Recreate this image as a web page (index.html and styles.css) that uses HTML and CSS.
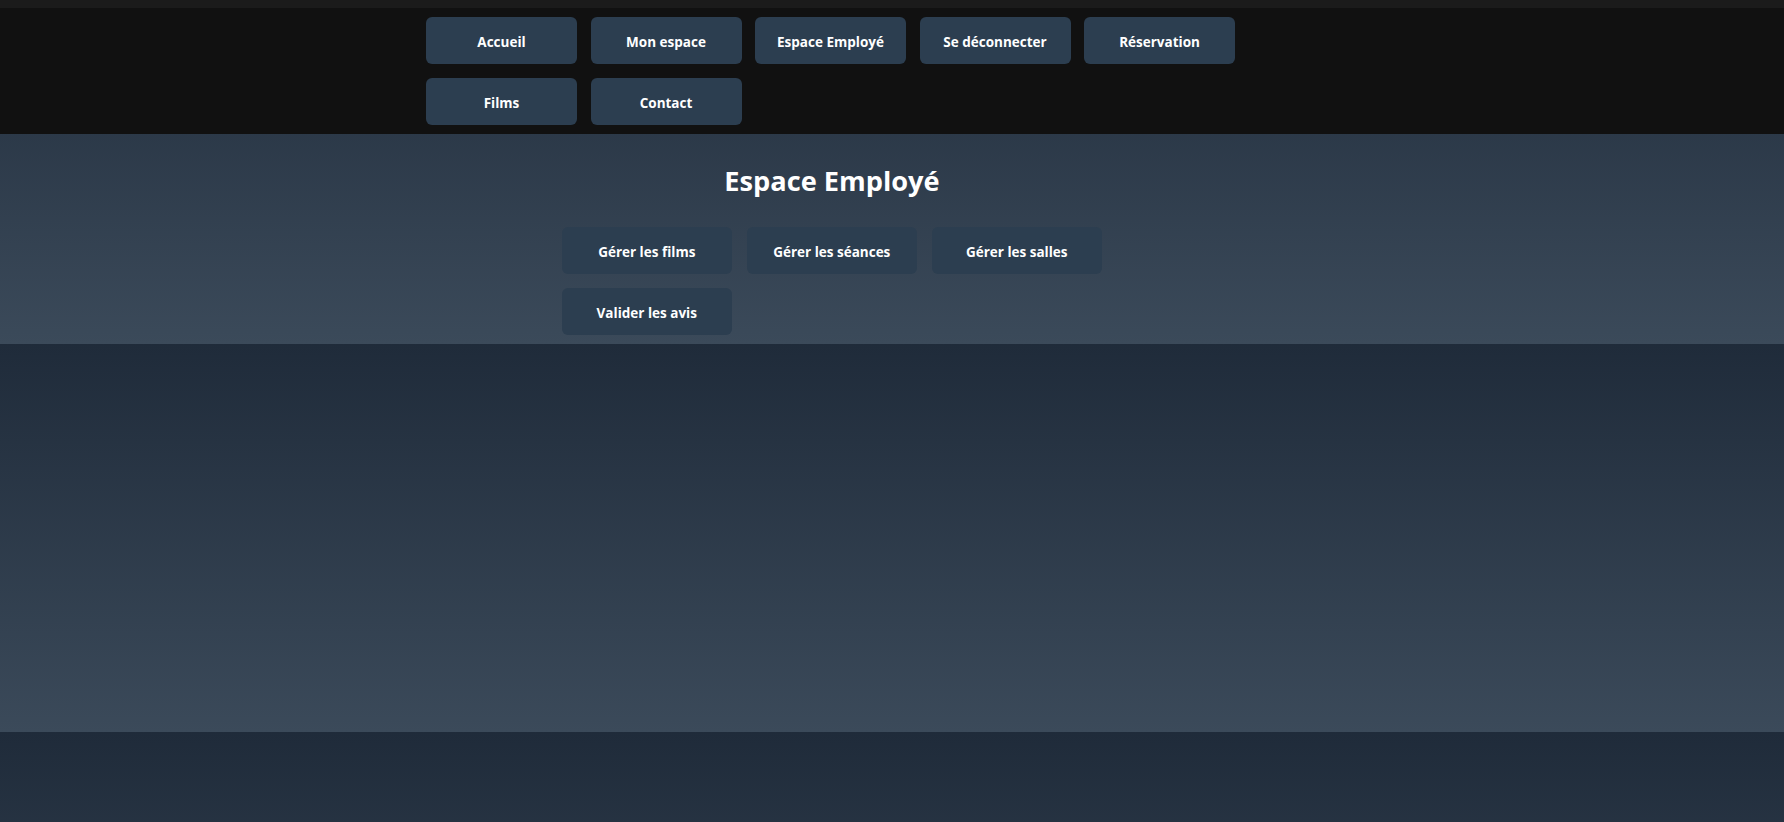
FILE: index.html
```html
<!DOCTYPE html>
<html lang="fr">
<head>
<meta charset="utf-8">
<title>Espace Employé</title>
<link rel="stylesheet" href="styles.css">
</head>
<body>
<header class="site-header">
  <div class="shift">
    <nav class="main-nav">
      <a class="nav-btn" href="#">Accueil</a>
      <a class="nav-btn" href="#">Mon espace</a>
      <a class="nav-btn" href="#">Espace Employé</a>
      <a class="nav-btn" href="#">Se déconnecter</a>
      <a class="nav-btn" href="#">Réservation</a>
      <a class="nav-btn" href="#">Films</a>
      <a class="nav-btn" href="#">Contact</a>
    </nav>
  </div>
</header>
<main class="employee">
  <div class="shift">
    <h1 class="page-title">Espace Employé</h1>
    <div class="actions">
      <a class="action-btn" href="#">Gérer les films</a>
      <a class="action-btn" href="#">Gérer les séances</a>
      <a class="action-btn" href="#">Gérer les salles</a>
      <a class="action-btn" href="#">Valider les avis</a>
    </div>
  </div>
</main>
</body>
</html>
```

FILE: styles.css
```css
html {
  background-color: #1f2b3a;
  background-image: linear-gradient(180deg, #1f2b3a 0%, #3b4a5a 100%);
  background-size: 100% 388px;
  background-position: 0 -44px;
  background-repeat: repeat-y;
}

body {
  margin: 0;
  font-family: "Open Sans", "Noto Sans", "Liberation Sans", sans-serif;
  color: #ffffff;
}

.shift {
  padding-right: 120px;
}

.site-header {
  background: #111111;
  border-top: 8px solid #1b1b1b;
  padding: 9px 0;
}

.main-nav {
  width: 812px;
  margin: 0 auto;
  display: flex;
  flex-wrap: wrap;
  gap: 14px 13.5px;
}

.nav-btn,
.action-btn {
  display: flex;
  align-items: center;
  justify-content: center;
  height: 47px;
  box-sizing: border-box;
  padding-top: 2px;
  background: #2c3e50;
  color: #ffffff;
  text-decoration: none;
  font-weight: 700;
  font-size: 13.5px;
  border-radius: 6px;
  white-space: nowrap;
}

.nav-btn {
  width: 151px;
}

.employee {
  padding: 10px 0;
}

.page-title {
  margin: 18px 0 27px;
  font-size: 27.2px;
  line-height: 38px;
  font-weight: 700;
  text-align: center;
  color: #ffffff;
}

.actions {
  width: 541px;
  margin: 0 auto;
  display: grid;
  grid-template-columns: repeat(3, 170.5px);
  gap: 14px 14.5px;
}
```
